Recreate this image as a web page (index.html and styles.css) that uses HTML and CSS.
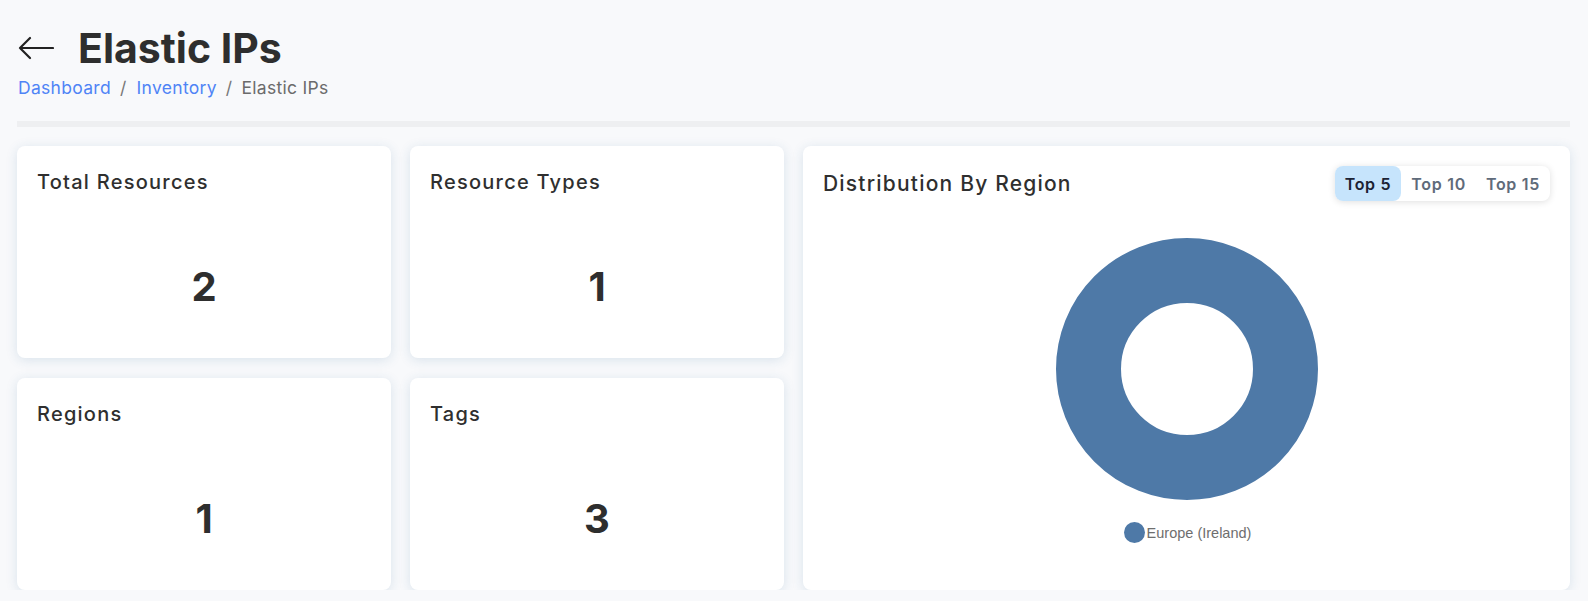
FILE: index.html
```html
<!DOCTYPE html>
<html lang="en">
<head>
<meta charset="utf-8">
<title>Elastic IPs</title>
<link rel="stylesheet" href="styles.css">
</head>
<body>
<div class="page">
  <header class="page-header">
    <div class="title-row">
      <svg class="back" width="36" height="24" viewBox="0 0 36 24" aria-hidden="true">
        <path d="M35 12H2M12 2L2 12l10 10" fill="none" stroke="#222" stroke-width="2.2" stroke-linecap="round" stroke-linejoin="round"/>
      </svg>
      <h1 class="title">Elastic IPs</h1>
    </div>
    <nav class="breadcrumb">
      <a href="#">Dashboard</a><span class="sep">/</span><a href="#">Inventory</a><span class="sep">/</span><span class="current">Elastic IPs</span>
    </nav>
  </header>
  <div class="divider"></div>
  <main class="grid">
    <section class="card stat">
      <h2 class="card-title">Total Resources</h2>
      <div class="stat-value">2</div>
    </section>
    <section class="card stat">
      <h2 class="card-title">Resource Types</h2>
      <div class="stat-value">1</div>
    </section>
    <section class="card chart-card">
      <div class="chart-head">
        <h2 class="card-title chart-title">Distribution By Region</h2>
        <div class="tabs">
          <button class="tab active">Top 5</button>
          <button class="tab">Top 10</button>
          <button class="tab">Top 15</button>
        </div>
      </div>
      <div class="chart">
        <svg class="donut" width="262" height="262" viewBox="0 0 262 262" aria-hidden="true">
          <circle cx="131" cy="131" r="98.5" fill="none" stroke="#4e79a7" stroke-width="65"/>
        </svg>
        <div class="legend">
          <span class="dot"></span><span class="legend-label">Europe (Ireland)</span>
        </div>
      </div>
    </section>
    <section class="card stat">
      <h2 class="card-title">Regions</h2>
      <div class="stat-value">1</div>
    </section>
    <section class="card stat">
      <h2 class="card-title">Tags</h2>
      <div class="stat-value">3</div>
    </section>
  </main>
</div>
</body>
</html>
```
FILE: styles.css
```css
* { box-sizing: border-box; }
html, body { margin: 0; padding: 0; }
body {
  background: #f8f9fb;
  font-family: Inter, "Noto Sans", sans-serif;
  color: #2f2f2f;
}
.page { padding: 24px 18px 0 17px; }
.title-row {
  display: flex;
  align-items: center;
  height: 48px;
}
.back { margin-left: 1px; margin-right: 24px; }
.title {
  margin: 0;
  font-size: 41px;
  font-weight: 700;
  line-height: 48px;
  color: #2e2e2e;
  letter-spacing: 0;
}
.breadcrumb {
  margin-top: 4px;
  font-size: 17.5px;
  line-height: 24px;
  letter-spacing: 0.3px;
  display: flex;
  align-items: center;
}
.breadcrumb a { color: #4f84f6; text-decoration: none; margin-left: 1px; }
.breadcrumb .sep { color: #777; margin: 0 9px; }
.breadcrumb .current { color: #6b6b6b; }
.divider {
  height: 6px;
  background: #eeeff1;
  margin-top: 21px;
}
.grid {
  margin-top: 19px;
  display: grid;
  grid-template-columns: repeat(4, 1fr);
  grid-template-rows: 212px 212px;
  gap: 20px 19px;
}
.card {
  background: #fff;
  border-radius: 8px;
  box-shadow: 0 2px 12px rgba(40, 100, 150, 0.15);
  padding: 22px 20px 20px;
}
.stat { display: flex; flex-direction: column; }
.card-title {
  margin: 0;
  font-size: 20px;
  font-weight: 500;
  line-height: 28px;
  letter-spacing: 1.25px;
  color: #2f2f2f;
}
.chart-title { font-size: 21px; letter-spacing: 1.2px; }
.stat-value {
  margin-top: auto;
  margin-bottom: 27px;
  text-align: center;
  font-size: 40px;
  font-weight: 700;
  line-height: 48px;
  color: #2e2e2e;
}
.chart-card {
  grid-column: 3 / span 2;
  grid-row: 1 / span 2;
  padding: 20px;
  display: flex;
  flex-direction: column;
}
.chart-head {
  display: flex;
  align-items: center;
  justify-content: space-between;
  height: 35px;
}
.tabs {
  display: flex;
  background: #fff;
  border-radius: 8px;
  box-shadow: 0 1px 7px rgba(0, 0, 0, 0.13);
  height: 35px;
}
.tab {
  border: 0;
  background: transparent;
  font-family: inherit;
  font-size: 16px;
  font-weight: 600;
  letter-spacing: 0.7px;
  color: #5f6b7a;
  padding: 0 10px;
  border-radius: 8px;
  cursor: pointer;
}
.tab.active { background: #c6e4fc; color: #1c2233; }
.chart {
  display: flex;
  flex-direction: column;
  align-items: center;
  margin-top: 37px;
}
.donut { display: block; }
.legend {
  margin-top: 22px;
  display: flex;
  align-items: center;
  font-family: "Liberation Sans", Arial, sans-serif;
  font-size: 14.5px;
  color: #6e6e6e;
  margin-left: 2px;
}
.dot {
  width: 21px;
  height: 21px;
  border-radius: 50%;
  background: #4e79a7;
  margin-right: 2px;
}
```
